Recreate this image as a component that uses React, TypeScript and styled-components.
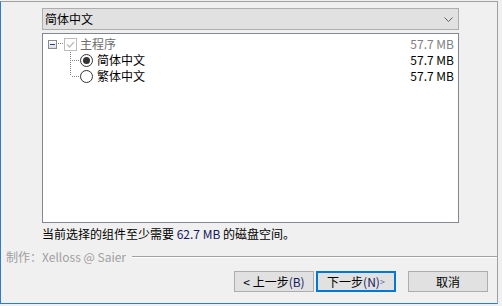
import React from "react";
import styled, { createGlobalStyle } from "styled-components";

const GlobalStyle = createGlobalStyle`
  html, body {
    margin: 0;
    padding: 0;
    background: #f0f0f0;
  }
  body {
    font-family: "Noto Sans CJK SC", "Noto Sans", sans-serif;
    font-size: 12px;
    line-height: 16px;
    color: #000;
  }
`;

type Item = { label: string; size: string; checked: boolean; last: boolean };

const items: Item[] = [
  { label: "简体中文", size: "57.7 MB", checked: true, last: false },
  { label: "繁体中文", size: "57.7 MB", checked: false, last: true },
];

const App = () => {
  return (
    <>
      <GlobalStyle />
      <Frame>
        <Body>
          <Combo>
            <ComboText>简体中文</ComboText>
            <svg width="9" height="5" viewBox="0 0 9 5">
              <polyline points="0.5,0.5 4.5,4.5 8.5,0.5" fill="none" stroke="#606060" strokeWidth="1" />
            </svg>
          </Combo>
          <List>
            <Row>
              <MinusBox />
              <svg width="7" height="16" viewBox="0 0 7 16">
                <line x1="1" y1="7.5" x2="7" y2="7.5" stroke="#808080" strokeDasharray="1 1" />
              </svg>
              <Check>
                <svg width="11" height="11" viewBox="0 0 11 11">
                  <polyline points="2,5.5 4.5,8 9,3" fill="none" stroke="#bcbcbc" strokeWidth="1.3" />
                </svg>
              </Check>
              <Label $muted>主程序</Label>
              <Size $muted>57.7 MB</Size>
            </Row>
            {items.map((item) => (
              <Row key={item.label}>
                <Indent />
                <svg width="10" height="16" viewBox="0 0 10 16">
                  <line x1="0.5" y1="0" x2="0.5" y2={item.last ? 8 : 16} stroke="#808080" strokeDasharray="1 1" />
                  <line x1="2" y1="8.5" x2="10" y2="8.5" stroke="#808080" strokeDasharray="1 1" />
                </svg>
                <Radio $checked={item.checked} />
                <Label $gap={4}>{item.label}</Label>
                <Size>{item.size}</Size>
              </Row>
            ))}
          </List>
          <Status>
            当前选择的组件至少需要 <Blue>62.7 MB</Blue> 的磁盘空间。
          </Status>
        </Body>
        <Footer>
          <Credit>
            <span>制作：Xelloss @ Saier</span>
            <Etched />
          </Credit>
          <Buttons>
            <Button>
              &lt; 上一步<Blue>(B)</Blue>
            </Button>
            <Button $focused>
              下一步<Blue>(N)</Blue> <Small>&gt;</Small>
            </Button>
            <Button $spaced>取消</Button>
          </Buttons>
        </Footer>
      </Frame>
    </>
  );
};

export default App;

const Frame = styled.div`
  box-sizing: border-box;
  margin-top: 1px;
  width: 498px;
  height: 303px;
  border-top: 1px solid #a0a0a0;
  border-right: 1px solid #a0a0a0;
  border-left: 1px solid #2a7bd3;
  border-bottom: 1px solid #2a7bd3;
  background: #f0f0f0;
  display: flex;
  flex-direction: column;
`;

const Body = styled.div`
  padding: 6px 0 0 41px;
  display: flex;
  flex-direction: column;
`;

const Combo = styled.div`
  box-sizing: border-box;
  width: 417px;
  height: 22px;
  background: #e1e1e1;
  border: 1px solid #adadad;
  display: flex;
  align-items: center;
  justify-content: space-between;
  padding: 0 5px 0 2px;
`;

const ComboText = styled.span`
  color: #000;
`;

const List = styled.div`
  box-sizing: border-box;
  margin-top: 3px;
  width: 417px;
  height: 190px;
  background: #fff;
  border: 1px solid #828790;
  padding: 2px 4px 0 5px;
  display: flex;
  flex-direction: column;
`;

const Row = styled.div`
  height: 16px;
  display: flex;
  align-items: center;
`;

const MinusBox = styled.span`
  box-sizing: border-box;
  width: 9px;
  height: 9px;
  border: 1px solid #8a8a8a;
  background: linear-gradient(#ffffff, #dcdcdc);
  display: flex;
  align-items: center;
  justify-content: center;
  &::after {
    content: "";
    width: 5px;
    height: 1px;
    background: #1f3f8f;
  }
`;

const Check = styled.span`
  box-sizing: border-box;
  width: 13px;
  height: 13px;
  border: 1px solid #bcbcbc;
  background: #fff;
  display: flex;
  align-items: center;
  justify-content: center;
`;

const Indent = styled.span`
  width: 22px;
  flex: none;
`;

const Radio = styled.span<{ $checked?: boolean }>`
  box-sizing: border-box;
  width: 13px;
  height: 13px;
  border-radius: 50%;
  border: 1px solid #333;
  background: #fff;
  display: flex;
  align-items: center;
  justify-content: center;
  &::after {
    content: "";
    width: 7px;
    height: 7px;
    border-radius: 50%;
    background: ${(p) => (p.$checked ? "#333" : "transparent")};
  }
`;

const Label = styled.span<{ $muted?: boolean; $gap?: number }>`
  margin-left: ${(p) => p.$gap ?? 3}px;
  color: ${(p) => (p.$muted ? "#6d6d6d" : "#000")};
`;

const Size = styled.span<{ $muted?: boolean }>`
  margin-left: auto;
  color: ${(p) => (p.$muted ? "#808080" : "#000")};
`;

const Status = styled.div`
  margin-top: 3px;
  height: 16px;
`;

const Blue = styled.span`
  color: #141a5e;
`;

const Footer = styled.div`
  display: flex;
  flex-direction: column;
`;

const Credit = styled.div`
  margin-top: 7px;
  height: 16px;
  padding-left: 5px;
  display: flex;
  align-items: center;
  color: #a0a0a0;
`;

const Etched = styled.span`
  flex: 1;
  margin-left: 6px;
  height: 0;
  border-top: 1px solid #a0a0a0;
  border-bottom: 1px solid #fff;
`;

const Buttons = styled.div`
  margin-top: 6px;
  padding-right: 9px;
  display: flex;
  justify-content: flex-end;
  gap: 2px;
`;

const Button = styled.button<{ $focused?: boolean; $spaced?: boolean }>`
  box-sizing: border-box;
  width: 80px;
  height: 21px;
  margin-left: ${(p) => (p.$spaced ? "10px" : "0")};
  padding: 0;
  font: inherit;
  color: #000;
  background: #e1e1e1;
  border: ${(p) => (p.$focused ? "2px solid #0078d7" : "1px solid #adadad")};
  display: flex;
  align-items: center;
  justify-content: center;
  white-space: pre;
`;

const Small = styled.span`
  font-size: 9px;
  color: #5a6aa0;
`;
